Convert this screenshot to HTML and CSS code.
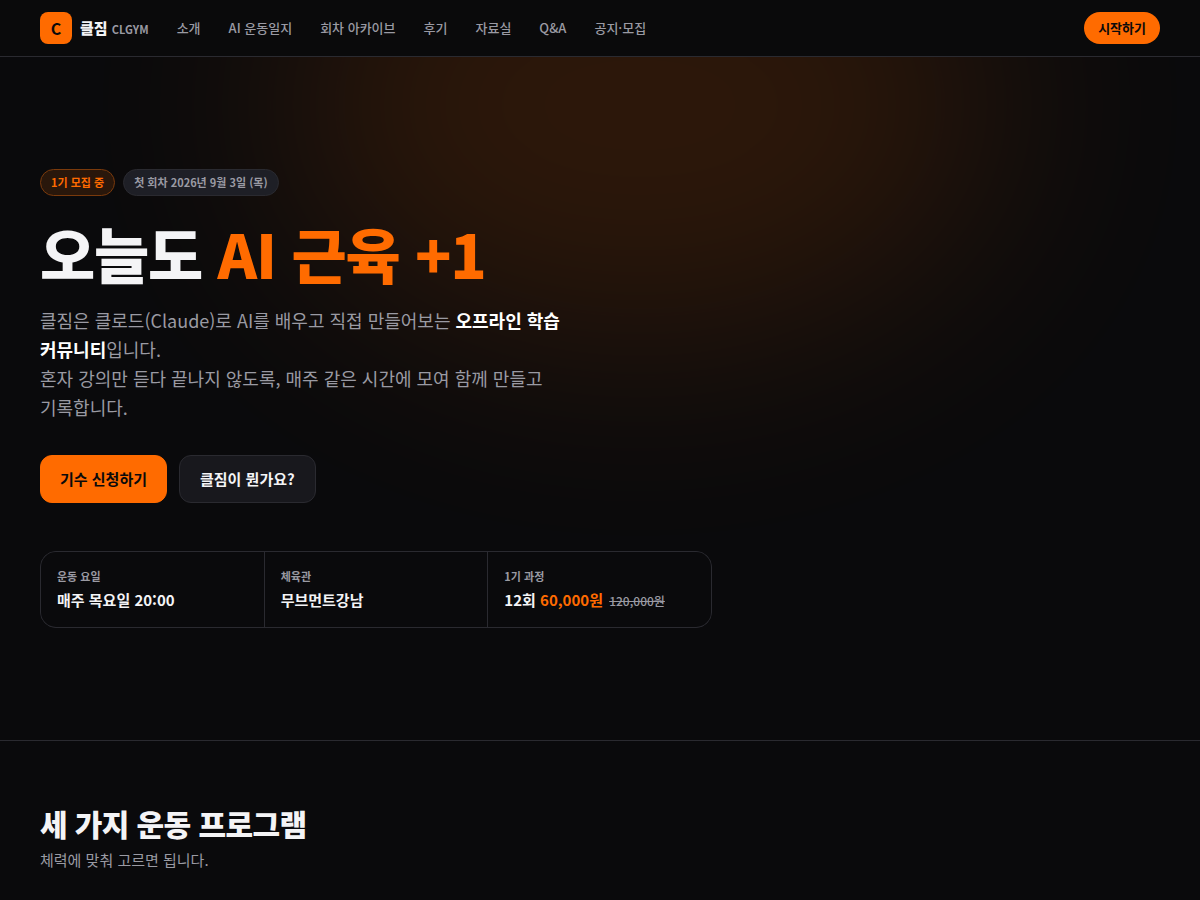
FILE: index.html
```
<!DOCTYPE html>
<html lang="ko">
<head>
  <meta charset="UTF-8" />
  <meta name="viewport" content="width=device-width, initial-scale=1.0"/>
  <title>클짐 CLGYM</title>
  <link rel="stylesheet" href="styles.css">
</head>
<body>
  <header class="topbar">
    <div class="container topbar-inner">
      <a class="brand" href="#">
        <span class="logo">C</span>
        <span class="brand-name">클짐 <small>CLGYM</small></span>
      </a>
      <nav class="menu">
        <a href="#about">소개</a>
        <a href="#journal">AI 운동일지</a>
        <a href="#archive">회차 아카이브</a>
        <a href="#reviews">후기</a>
        <a href="#files">자료실</a>
        <a href="#qna">Q&amp;A</a>
        <a href="#notice">공지·모집</a>
      </nav>
      <a class="start" href="#apply">시작하기</a>
    </div>
  </header>

  <main>
    <section class="hero">
      <div class="glow"></div>
      <div class="container hero-inner">
        <div class="badges">
          <span class="badge badge-hot">1기 모집 중</span>
          <span class="badge">첫 회차 2026년 9월 3일 (목)</span>
        </div>
        <h1>오늘도 <span class="accent">AI 근육 +1</span></h1>
        <p class="lead">클짐은 클로드(Claude)로 AI를 배우고 직접 만들어보는 <strong>오프라인 학습 커뮤니티</strong>입니다.<br>혼자 강의만 듣다 끝나지 않도록, 매주 같은 시간에 모여 함께 만들고 기록합니다.</p>
        <div class="actions">
          <a class="btn btn-primary" href="#apply">기수 신청하기</a>
          <a class="btn btn-ghost" href="#about">클짐이 뭔가요?</a>
        </div>
        <dl class="facts">
          <div class="fact">
            <dt>운동 요일</dt>
            <dd>매주 목요일 20:00</dd>
          </div>
          <div class="fact">
            <dt>체육관</dt>
            <dd>무브먼트강남</dd>
          </div>
          <div class="fact">
            <dt>1기 과정</dt>
            <dd>12회 <span class="accent">60,000원</span> <del>120,000원</del></dd>
          </div>
        </dl>
      </div>
    </section>

    <section class="programs">
      <div class="container">
        <h2>세 가지 운동 프로그램</h2>
        <p>체력에 맞춰 고르면 됩니다.</p>
      </div>
    </section>
  </main>
</body>
</html>
```
FILE: styles.css
```
* { box-sizing: border-box; }
body { margin: 0; background: #0a0a0c; color: #f4f4f6; font-family: "Noto Sans CJK KR", sans-serif; font-size: 16px; line-height: 24px; word-break: keep-all; }
a { color: inherit; text-decoration: none; }
h1, h2, p, dl, dd { margin: 0; }
h1, h2 { font-weight: 900; letter-spacing: -0.02em; }
.container { max-width: 1200px; margin: 0 auto; padding: 0 40px; }
.accent { color: #ff6b00; }

/* top bar */
.topbar { position: sticky; top: 0; z-index: 10; background: #0a0a0b; border-bottom: 1px solid #2a2a30; }
.topbar-inner { display: flex; align-items: center; gap: 28px; height: 56px; }
.brand { display: flex; align-items: center; gap: 8px; }
.logo { display: grid; place-items: center; width: 32px; height: 32px; border-radius: 8px; background: #ff6b00; color: #0a0a0b; font-size: 16px; font-weight: 700; }
.brand-name { font-size: 15px; font-weight: 900; }
.brand-name small { color: #9a9aa3; font-size: 11px; font-weight: 700; }
.menu { display: flex; flex: 1; gap: 28px; color: #9a9aa3; font-size: 13px; font-weight: 500; }
.start { padding: 4px 14px; border-radius: 16px; background: #ff6b00; color: #0a0a0b; font-size: 13px; font-weight: 700; }

/* hero */
.hero { position: relative; overflow: hidden; border-bottom: 1px solid #2a2a30; }
.glow { position: absolute; top: -192px; left: 50%; width: 720px; height: 480px; margin-left: -320px; border-radius: 50%; background: #ff6b00; opacity: 0.14; filter: blur(110px); }
.hero-inner { position: relative; padding-top: 112px; padding-bottom: 112px; }
.badges { display: flex; gap: 8px; }
.badge { padding: 4px 10px; border: 1px solid #2a2a30; border-radius: 14px; background: #1e1f26; color: #9a9aa3; font-size: 11px; line-height: 17px; font-weight: 700; }
.badge-hot { border-color: #7a3a0c; background: #29170b; color: #ff6b00; }
h1 { margin-top: 24px; font-size: 60px; line-height: 66px; }
.lead { max-width: 560px; margin-top: 20px; color: #9a9aa3; font-size: 18px; line-height: 29px; }
.lead strong { color: #fff; font-weight: 700; }
.actions { display: flex; gap: 12px; margin-top: 33px; }
.btn { padding: 11px 19px; border: 1px solid #ff6b00; border-radius: 12px; font-size: 15px; font-weight: 700; }
.btn-primary { background: #ff6b00; color: #0a0a0b; }
.btn-ghost { padding: 11px 20px; border-color: #2a2a30; background: #18181d; }
.facts { display: grid; grid-template-columns: repeat(3, 1fr); gap: 1px; max-width: 672px; margin-top: 48px; border: 1px solid #2a2a30; border-radius: 16px; background: #2a2a30; overflow: hidden; }
.fact { padding: 16px; background: #0a0a0c; }
.fact dt { color: #9a9aa3; font-size: 11px; line-height: 17px; font-weight: 700; }
.fact dd { margin-top: 4px; font-size: 15px; line-height: 22px; font-weight: 700; }
.fact dd { height: 22px; }
.fact del { margin-left: 2px; color: #9a9aa3; font-size: 12px; line-height: 16px; font-weight: 500; }

/* programs */
.programs { padding: 64px 0; }
h2 { font-size: 30px; line-height: 36px; }
.programs p { margin-top: 7px; color: #9a9aa3; font-size: 15px; }
```
